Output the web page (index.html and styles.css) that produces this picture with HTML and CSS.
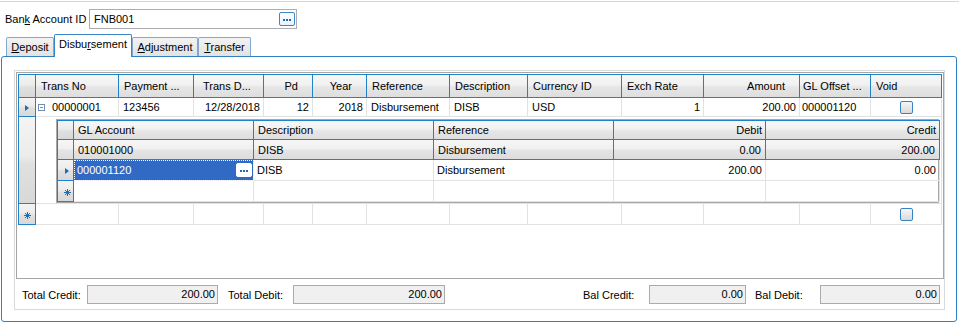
FILE: index.html
```html
<!DOCTYPE html>
<html>
  <head>
    <meta charset="utf-8">
    <link rel="stylesheet" href="styles.css">
  </head>
  <body>
    <div class="topline"></div>

    <div class="account-row">
      <span class="account-label">Ban<u>k</u> Account ID</span>
      <div class="textbox">
        <span class="textbox-value">FNB001</span>
        <span class="dots-btn"><i></i><i></i><i></i></span>
      </div>
    </div>

    <div class="tabs">
      <div class="tab tab-deposit"><u>D</u>eposit</div>
      <div class="tab tab-disb active">Disbu<u>r</u>sement</div>
      <div class="tab tab-adj"><u>A</u>djustment</div>
      <div class="tab tab-transfer"><u>T</u>ransfer</div>
    </div>

    <div class="panel">
      <div class="group">
        <div class="grid">
          <table class="master">
            <colgroup>
              <col style="width:18px">
              <col style="width:83px">
              <col style="width:75px">
              <col style="width:70px">
              <col style="width:49px">
              <col style="width:54px">
              <col style="width:83px">
              <col style="width:78px">
              <col style="width:94px">
              <col style="width:82px">
              <col style="width:96px">
              <col style="width:71px">
              <col style="width:71px">
            </colgroup>
            <tr class="head">
              <th class="sel"></th>
              <th>Trans No</th>
              <th>Payment ...</th>
              <th class="pad-date">Trans D...</th>
              <th class="num">Pd</th>
              <th class="num">Year</th>
              <th>Reference</th>
              <th>Description</th>
              <th>Currency ID</th>
              <th>Exch Rate</th>
              <th class="num">Amount</th>
              <th class="tight">GL Offset ...</th>
              <th>Void</th>
            </tr>
            <tr class="row">
              <td class="sel"><span class="arrow"></span></td>
              <td class="first"><span class="collapse"></span>00000001</td>
              <td>123456</td>
              <td class="num">12/28/2018</td>
              <td class="num">12</td>
              <td class="num">2018</td>
              <td>Disbursement</td>
              <td>DISB</td>
              <td>USD</td>
              <td class="num">1</td>
              <td class="num">200.00</td>
              <td class="tight">000001120</td>
              <td class="center"><span class="check"></span></td>
            </tr>
            <tr class="detail">
              <td class="sel"></td>
              <td class="detail-cell" colspan="12">
                <div class="child">
                  <table class="lines">
                    <colgroup>
                      <col style="width:17px">
                      <col style="width:180px">
                      <col style="width:180px">
                      <col style="width:180px">
                      <col style="width:152px">
                      <col style="width:174px">
                    </colgroup>
                    <tr class="head">
                      <th class="sel"></th>
                      <th>GL Account</th>
                      <th>Description</th>
                      <th>Reference</th>
                      <th class="num">Debit</th>
                      <th class="num">Credit</th>
                    </tr>
                    <tr class="summary">
                      <td class="sel"></td>
                      <td>010001000</td>
                      <td>DISB</td>
                      <td>Disbursement</td>
                      <td class="num">0.00</td>
                      <td class="num">200.00</td>
                    </tr>
                    <tr class="row">
                      <td class="sel"><span class="arrow"></span></td>
                      <td class="current">
                        <div class="current-inner">
                          <span>000001120</span>
                          <span class="dots-btn"><i></i><i></i><i></i></span>
                        </div>
                      </td>
                      <td>DISB</td>
                      <td>Disbursement</td>
                      <td class="num">200.00</td>
                      <td class="num">0.00</td>
                    </tr>
                    <tr class="row">
                      <td class="sel">
                        <svg class="star" width="7" height="7" viewBox="0 0 7 7"><path d="M3.5 0v7M0 3.5h7M1 1l5 5M6 1l-5 5" stroke="#1f6fb8" stroke-width="1"/></svg>
                      </td>
                      <td></td>
                      <td></td>
                      <td></td>
                      <td></td>
                      <td></td>
                    </tr>
                  </table>
                </div>
              </td>
            </tr>
            <tr class="row new">
              <td class="sel">
                <svg class="star" width="7" height="7" viewBox="0 0 7 7"><path d="M3.5 0v7M0 3.5h7M1 1l5 5M6 1l-5 5" stroke="#1f6fb8" stroke-width="1"/></svg>
              </td>
              <td></td>
              <td></td>
              <td></td>
              <td></td>
              <td></td>
              <td></td>
              <td></td>
              <td></td>
              <td></td>
              <td></td>
              <td></td>
              <td class="center"><span class="check"></span></td>
            </tr>
          </table>
        </div>

        <div class="totals">
          <span class="t-label">Total Credit:</span>
          <span class="t-box box-credit">200.00</span>
          <span class="t-label">Total Debit:</span>
          <span class="t-box box-debit">200.00</span>
          <span class="t-label bal-credit">Bal Credit:</span>
          <span class="t-box box-bal-credit">0.00</span>
          <span class="t-label">Bal Debit:</span>
          <span class="t-box box-bal-debit">0.00</span>
        </div>
      </div>
    </div>
  </body>
</html>
```

FILE: styles.css
```css
body {
  margin: 0;
  padding: 0;
  font-family: "Liberation Sans", Arial, sans-serif;
  font-size: 11px;
  color: #000;
  background-color: #fff;
  width: 959px;
  height: 322px;
  overflow: hidden;
}
u {
  text-decoration: underline;
  text-underline-offset: 1px;
}

.topline {
  margin-top: 1px;
  border-top: 1px solid #d6d6d6;
}

/* bank account */
.account-row {
  display: flex;
  align-items: center;
  padding: 7px 0 0 5px;
  height: 20px;
}
.account-label {
  width: 84px;
}
.textbox {
  box-sizing: border-box;
  width: 208px;
  height: 20px;
  border: 1px solid #abadb3;
  display: flex;
  align-items: center;
  padding-left: 4px;
}
.textbox-value {
  flex: 1;
}
.textbox .dots-btn {
  margin-right: 1px;
}
.dots-btn {
  box-sizing: border-box;
  width: 16px;
  height: 14px;
  border: 1px solid #3c87c6;
  border-radius: 2px;
  background: linear-gradient(#ffffff, #eaf2fa);
  display: flex;
  align-items: center;
  justify-content: center;
  gap: 1px;
  padding-top: 2px;
}
.dots-btn i {
  width: 2px;
  height: 2px;
  background: #1e6cb5;
}

/* tabs */
.tabs {
  display: flex;
  align-items: flex-end;
  height: 27px;
  padding-left: 6px;
}
.tab {
  box-sizing: border-box;
  height: 19px;
  border: 1px solid #7fa9d3;
  border-bottom: none;
  border-radius: 2px 2px 0 0;
  background: linear-gradient(#f3f3f3, #e2e2e2);
  text-align: center;
  line-height: 18px;
}
.tab.active {
  position: relative;
  z-index: 1;
  height: 23px;
  margin-bottom: -1px;
  background: #fff;
  border-color: #3a86c5;
  line-height: 19px;
}
.tab-deposit { width: 48px; }
.tab-disb { width: 78px; }
.tab-adj { width: 66px; }
.tab-transfer { width: 53px; }

/* panel */
.panel {
  box-sizing: border-box;
  margin-left: 1px;
  width: 956px;
  height: 266px;
  border: 1px solid #2f80c2;
  border-radius: 3px;
  padding: 13px 11px 11px 12px;
}
.group {
  border: 1px solid #d9d9d9;
  padding: 1px 0 5px 1px;
}
.grid {
  box-sizing: border-box;
  width: 928px;
  height: 207px;
  border: 1px solid #a5a5a5;
  padding: 1px;
  background: #fff;
  overflow: hidden;
}

/* tables */
table {
  border-collapse: separate;
  border-spacing: 0;
  table-layout: fixed;
}
.master {
  width: 924px;
}
td, th {
  padding: 0 4px;
  white-space: nowrap;
  overflow: hidden;
  font-weight: normal;
  text-align: left;
  border-right: 1px solid #e2e2e2;
  border-bottom: 1px solid #e2e2e2;
}
.num {
  text-align: right;
  padding-right: 3px;
}
.center {
  text-align: center;
}
.tight {
  padding-left: 2px;
}

.head th {
  height: 22px;
  padding-left: 5px;
  background: linear-gradient(#f7f7f7 0%, #f1f1f1 45%, #e6e6e6 55%, #dedede 100%);
  border-top: 1px solid #2083c9;
  border-right: 1px solid #2083c9;
  border-bottom: 1px solid #2083c9;
}
.head th.num {
  padding-right: 14px;
}
.head th.pad-date {
  padding-left: 9px;
}
.head th.tight {
  padding-left: 3px;
}
.head th:first-child,
td.sel {
  border-left: 1px solid #2083c9;
}
td.sel, th.sel {
  padding: 0;
  text-align: center;
  background: linear-gradient(#f4f4f4 0%, #ececec 45%, #e0e0e0 55%, #d8d8d8 100%);
  border-right: 1px solid #2083c9;
  border-bottom: 1px solid #2083c9;
}

.master .row td {
  height: 18px;
}
.master .row.new td {
  height: 20px;
}
.master td.first {
  padding-left: 2px;
}

.arrow {
  display: inline-block;
  width: 0;
  height: 0;
  border-left: 4px solid #1c6db6;
  border-top: 3px solid transparent;
  border-bottom: 3px solid transparent;
  vertical-align: middle;
}
.star {
  display: inline-block;
  vertical-align: middle;
}
.collapse {
  display: inline-block;
  box-sizing: border-box;
  width: 7px;
  height: 7px;
  border: 1px solid #6e8fb5;
  margin-right: 7px;
  vertical-align: middle;
  position: relative;
  top: -1px;
  background: linear-gradient(#6e8fb5, #6e8fb5) center / 3px 1px no-repeat;
}
.check {
  display: inline-block;
  box-sizing: border-box;
  width: 13px;
  height: 13px;
  border: 1px solid #3a83c2;
  border-radius: 2px;
  background: linear-gradient(#f6f6f6, #dadada);
  vertical-align: middle;
}

/* child grid */
.detail-cell {
  padding: 0;
  vertical-align: top;
}
.child {
  margin: 2px 2px 0 20px;
  border: 1px solid #a8a8a8;
}
.lines {
  width: 883px;
}
.lines .head th {
  height: 18px;
  padding-left: 4px;
}
.lines .head th.num {
  padding-right: 3px;
}
.lines td {
  height: 19px;
  padding-left: 3px;
}
.lines .row td {
  height: 20px;
}
.lines .summary td {
  background: linear-gradient(#f6f6f6 0%, #f0f0f0 45%, #e4e4e4 55%, #dcdcdc 100%);
  border-right: 1px solid #2083c9;
  border-bottom: 1px solid #2083c9;
  padding-left: 4px;
}
.lines .summary td.num {
  padding-right: 4px;
}
.lines td.current {
  background: #316ac5;
  color: #fff;
  padding: 0 0 0 3px;
  outline: 1px dotted #ffffff;
  outline-offset: -1px;
}
.current-inner {
  display: flex;
  align-items: center;
  justify-content: space-between;
  padding-right: 1px;
}
.current-inner .dots-btn {
  border-color: #ffffff;
  background: #fff;
}

/* totals */
.totals {
  display: flex;
  align-items: center;
  margin-top: 6px;
  padding: 0 4px 0 6px;
  height: 19px;
}
.t-label {
  width: 65px;
}
.t-label.bal-credit {
  margin-left: auto;
  width: 66px;
}
.t-label:last-of-type {
  width: 66px;
}
.t-box {
  box-sizing: border-box;
  height: 19px;
  border: 1px solid #ababab;
  background: #f0f0f0;
  text-align: right;
  padding-right: 2px;
  line-height: 17px;
}
.box-credit { width: 131px; margin-right: 10px; }
.box-debit { width: 152px; }
.box-bal-credit { width: 97px; margin-right: 9px; }
.box-bal-debit { width: 120px; }
```
